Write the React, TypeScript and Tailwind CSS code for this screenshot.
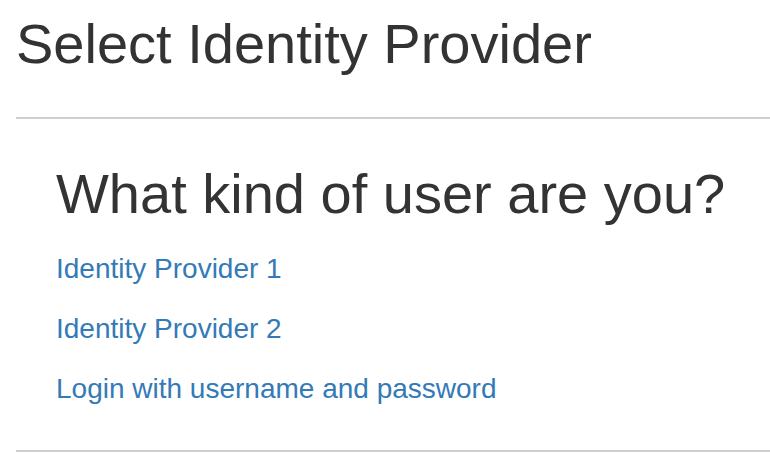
const providers = [
  { label: "Identity Provider 1", href: "#idp1" },
  { label: "Identity Provider 2", href: "#idp2" },
  { label: "Login with username and password", href: "#local" },
];

export default function App() {
  return (
    <div className="min-h-screen bg-white pl-4 font-['Liberation_Sans',Arial,sans-serif] text-[#333]">
      <h1 className="pt-[13px] text-[56px] leading-[1.1]">Select Identity Provider</h1>
      <hr className="mt-[42px] border-t-2 border-[#cfcfcf]" />

      <div className="pl-10">
        <h1 className="mt-[44px] text-[56px] leading-[1.1]">What kind of user are you?</h1>
        <div className="mt-[25px] flex flex-col gap-5">
          {providers.map((p) => (
            <a key={p.label} href={p.href} className="text-[28px] leading-[40px] text-[#337ab7]">
              {p.label}
            </a>
          ))}
        </div>
      </div>

      <hr className="mt-[41px] border-t-2 border-[#cfcfcf]" />
    </div>
  );
}
